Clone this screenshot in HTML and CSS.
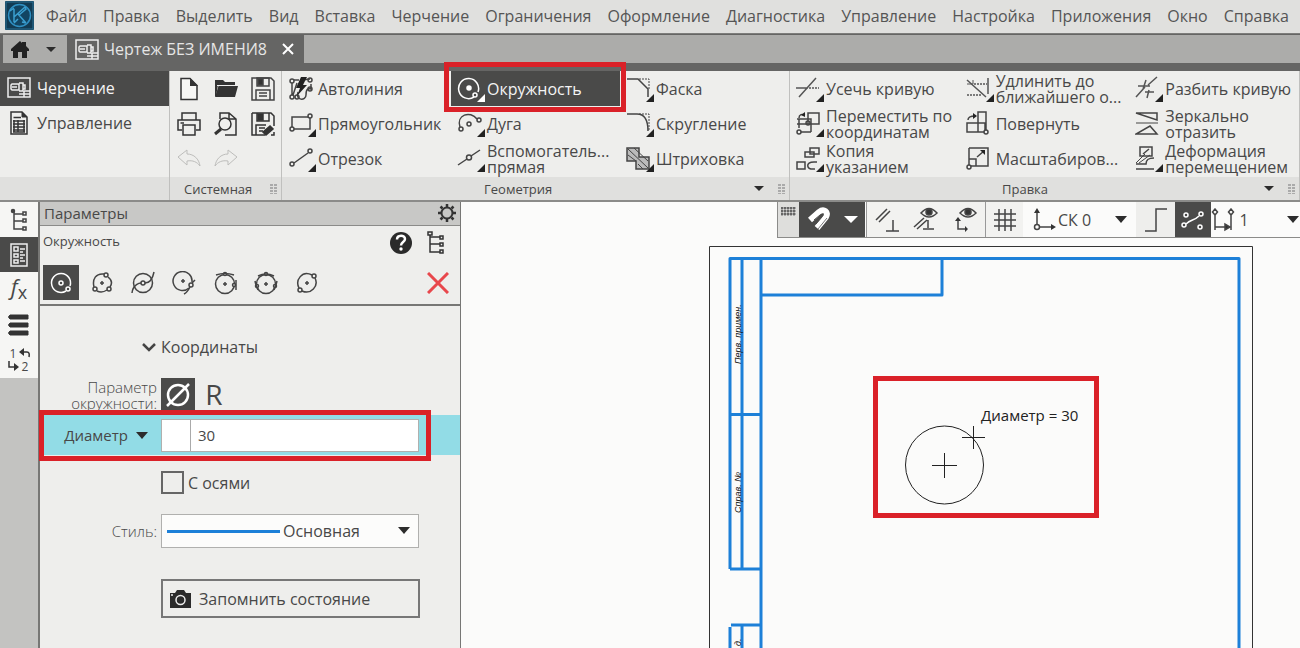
FILE: index.html
```html
<!DOCTYPE html>
<html lang="ru">
<head>
<meta charset="utf-8">
<title>Чертеж БЕЗ ИМЕНИ8</title>
<link rel="stylesheet" href="styles.css">
</head>
<body>
<div class="app">
  <header class="menubar">
    <svg class="logo" width="29" height="29" viewBox="0 0 29 29"><rect width="29" height="29" rx="1" fill="#123b53"/><rect x="1" y="1" width="27" height="27" fill="none" stroke="#2d7396"/><circle cx="14.500" cy="14.500" r="11" fill="#124563" stroke="#2f8fc2" stroke-width="1.500"/><path d="M9 8v13M9 16 20 6M13 13l8 9M5 10l4-3M9 22l4-4M20 6l1 2-7 6M17 21l4 1" fill="none" stroke="#3b9fd0" stroke-width="1.500"/></svg>
    <nav class="menu">
      <button>Файл</button><button>Правка</button><button>Выделить</button><button>Вид</button><button>Вставка</button><button>Черчение</button><button>Ограничения</button><button>Оформление</button><button>Диагностика</button><button>Управление</button><button>Настройка</button><button>Приложения</button><button>Окно</button><button>Справка</button>
    </nav>
  </header>

  <div class="tabs">
    <button class="home" aria-label="Главная">
      <svg width="20" height="18" viewBox="0 0 20 18"><path d="M1 9 10 1l2 2V2h4v4l3 3v2h-2v7h-5v-6H8v6H3v-7H1z" fill="#222"/></svg>
      <svg class="caret" width="10" height="5" viewBox="0 0 10 5"><path d="M0 0h10L5 5z"/></svg>
    </button>
    <div class="tab">
      <svg width="24" height="21" viewBox="0 0 24 21" fill="none" stroke="#eee" stroke-width="1.500"><rect x="1" y="1" width="22" height="19"/><path d="M5 7h7v6H5l-1-1V8zM12 6h4v8h-4M5 10h5M12 17h11M17 14h6M17 14v6M16 8h2v4h-2"/></svg>
      <span class="tab-title">Чертеж БЕЗ ИМЕНИ8</span>
      <button class="tab-close" aria-label="Закрыть"><svg width="12" height="12" viewBox="0 0 12 12"><path d="m1 1 10 10M11 1 1 11" stroke="#fff" stroke-width="2"/></svg></button>
    </div>
    <div class="tab-space"></div>
  </div>

  <div class="ribbon">
    <section class="group modes">
      <button class="mode active"><svg width="24" height="21" viewBox="0 0 24 21" fill="none" stroke="#eee" stroke-width="1.500"><rect x="1" y="1" width="22" height="19"/><path d="M5 7h7v6H5l-1-1V8zM12 6h4v8h-4M5 10h5M12 17h11M17 14h6M17 14v6M16 8h2v4h-2"/></svg>Черчение</button>
      <button class="mode"><svg width="24" height="24" viewBox="0 0 24 24" fill="none" stroke="#333"><path d="M4 1h11l5 5v17H4z" stroke-width="1.500"/><path d="M15 1v5h5z" fill="#333"/><path d="M6.500 6.500H14M6 10h12M6 13h12M6 16h12M6 19h12M7 9v12M11 9v12M17 9v12M6 21h12" stroke-width="1.500"/></svg>Управление</button>
      <div class="group-foot"></div>
    </section>

    <section class="group">
      <div class="system">
        <button aria-label="Создать"><svg width="24" height="24" viewBox="0 0 24 24"><path d="M4 1.500h9l7 7v14H4z" fill="#f7f7f5" stroke="#333" stroke-width="1.500"/><path d="M13 1v8h8z" fill="#333"/></svg></button>
        <button aria-label="Открыть"><svg width="24" height="24" viewBox="0 0 24 24"><path d="M1 3h8l2 2h10v3H4L2 19H1z" fill="#333"/><path d="M4.500 9H24l-3 11H1z" fill="#333"/><path d="M3 8.500h20" stroke="#eee"/></svg></button>
        <button aria-label="Сохранить"><svg width="24" height="24" viewBox="0 0 24 24" fill="none" stroke="#444" stroke-width="1.500"><path d="M1 1h19l3 3v19H1zM5 23V13h14v10M8 16h8M8 19h8"/><path d="M6 1h12v8H6z"/><path d="M7 2h5v6H7z" fill="#333"/></svg></button>
        <button aria-label="Печать"><svg width="24" height="24" viewBox="0 0 24 24" fill="none" stroke="#333" stroke-width="1.500"><path d="M5 8V1h14v7M5 18H1V8h22v10h-4M6 13h12v10H6zM3.500 11H7"/></svg></button>
        <button aria-label="Предпросмотр"><svg width="24" height="24" viewBox="0 0 24 24" fill="none" stroke="#333" stroke-width="1.500"><path d="M6 7V1h9l7 6v16H11M15 1v6h7"/><circle cx="11" cy="12" r="6" fill="#f0f0ee"/><path d="m7 17-6 5" stroke-width="3"/></svg></button>
        <button aria-label="Сохранить как"><svg width="24" height="24" viewBox="0 0 24 24" fill="none" stroke="#333" stroke-width="1.500"><path d="M1 1h19l3 3v10M14 23H1V1M5 23V13h10M6 1h12v8H6zM8 16h6M8 19h4"/><path d="M7 2h5v6H7z" fill="#333"/><path d="m12 20 7-6 3 3-7 6z" fill="#333"/><path d="M20 23h3v-3"/></svg></button>
        <button aria-label="Отменить" disabled><svg width="24" height="24" viewBox="0 0 24 24" fill="none" stroke="#bdbdbb"><path d="m1 10 9-7v4c7 0 12 5 13 12-3-4-7-6-13-5v4z"/></svg></button>
        <button aria-label="Повторить" disabled><svg width="24" height="24" viewBox="0 0 24 24" fill="none" stroke="#bdbdbb"><path d="m23 10-9-7v4C7 7 2 12 1 19c3-4 7-6 13-5v4z"/></svg></button>
      </div>
      <div class="group-foot"><span>Системная</span><i class="grip"></i></div>
    </section>

    <section class="group">
      <div class="tools">
        <button class="tool"><svg width="28" height="28" viewBox="0 0 28 28" fill="none" stroke="#444" stroke-width="1.500"><path d="M4 8v12M5 20 9 8M10 17c-3 9 8 9 8 3s2-7 5-6V9M14 5l8-1M6 5h5"/><circle cx="4" cy="6" r="2"/><circle cx="4" cy="22" r="2"/><circle cx="9" cy="22" r="2"/><circle cx="22" cy="5" r="2"/><circle cx="22" cy="14" r="2"/><path d="m13 2-5 11h4l-3 8 10-11h-4l4-8z" fill="#222" stroke="none"/></svg><span>Автолиния</span></button>
        <button class="tool active"><svg width="28" height="28" viewBox="0 0 28 28" fill="none" stroke="#fff" stroke-width="1.500"><path d="M17 22A10 10 0 1 1 21 17"/><circle cx="12" cy="13" r="2" fill="#fff"/><circle cx="18" cy="20" r="2"/><path d="M28 19v8h-8z" fill="#fff" stroke="none"/></svg><span>Окружность</span></button>
        <button class="tool"><svg width="28" height="28" viewBox="0 0 28 28" fill="none" stroke="#444" stroke-width="1.500"><path d="M1 4h11l10 10v8"/><path d="M13 4h10v10" stroke-dasharray="2 1" stroke-width="1"/><path d="M28 19v8h-8z" fill="#222" stroke="none"/></svg><span>Фаска</span></button>
        <button class="tool"><svg width="28" height="28" viewBox="0 0 28 28" fill="none" stroke="#444" stroke-width="1.500"><path d="M4 17V7h16M22 8v11H6"/><circle cx="22" cy="6" r="2"/><circle cx="4" cy="19" r="2"/><path d="M28 19v8h-8z" fill="#222" stroke="none"/></svg><span>Прямоугольник</span></button>
        <button class="tool"><svg width="28" height="28" viewBox="0 0 28 28" fill="none" stroke="#444" stroke-width="1.500"><path d="M3 17C-1 5 13 0 20 9"/><circle cx="4" cy="19" r="2"/><circle cx="22" cy="10" r="2"/><circle cx="12" cy="14" r="2"/><path d="M28 19v8h-8z" fill="#222" stroke="none"/></svg><span>Дуга</span></button>
        <button class="tool"><svg width="28" height="28" viewBox="0 0 28 28" fill="none" stroke="#444" stroke-width="1.500"><path d="M1 4h10c7 0 11 6 11 17"/><path d="M13 4h10v17" stroke-dasharray="2 1" stroke-width="1"/><path d="M28 19v8h-8z" fill="#222" stroke="none"/></svg><span>Скругление</span></button>
        <button class="tool"><svg width="28" height="28" viewBox="0 0 28 28" fill="none" stroke="#444" stroke-width="1.500"><path d="M6 18 20 8"/><circle cx="22" cy="6" r="2"/><circle cx="4" cy="19" r="2"/><path d="M28 19v8h-8z" fill="#222" stroke="none"/></svg><span>Отрезок</span></button>
        <button class="tool"><svg width="28" height="28" viewBox="0 0 28 28" fill="none" stroke="#444" stroke-width="1.500"><path d="m1 20 9-6M14 11l9-6"/><circle cx="12" cy="12.500" r="2.500"/><path d="M28 19v8h-8z" fill="#222" stroke="none"/></svg><span>Вспомогатель...<br>прямая</span></button>
        <button class="tool"><svg width="28" height="28" viewBox="0 0 28 28" fill="#bbb" stroke="#444" stroke-width="1.500"><path d="M1 3h12v9h10v12H10v-8H1z"/><path d="m2 4 20 19M2 10l8 6M8 3l14 13M12 19l5 5" stroke-width="1"/><path d="M28 19v8h-8z" fill="#222" stroke="none"/></svg><span>Штриховка</span></button>
      </div>
      <div class="group-foot"><span class="geo-title">Геометрия</span><svg class="caret" width="10" height="5" viewBox="0 0 10 5"><path d="M0 0h10L5 5z"/></svg><i class="grip"></i></div>
    </section>

    <section class="group">
      <div class="tools">
        <button class="tool"><svg width="28" height="28" viewBox="0 0 28 28" fill="none" stroke="#555" stroke-width="1.500"><path d="M0 13h12M3 22 20 3"/><path d="M13 13h10" stroke-dasharray="2 1"/><path d="M28 19v8h-8z" fill="#222" stroke="none"/></svg><span>Усечь кривую</span></button>
        <button class="tool"><svg width="28" height="28" viewBox="0 0 28 28" fill="none" stroke="#555" stroke-width="1.500"><path d="m1 5 19 17M22 3v16"/><path d="M8 9h13M1 20h15" stroke-dasharray="2 1"/><path d="M1 9h6V5" stroke-width="1"/><path d="M28 19v8h-8z" fill="#222" stroke="none"/></svg><span>Удлинить до<br>ближайшего о...</span></button>
        <button class="tool"><svg width="28" height="28" viewBox="0 0 28 28" fill="none" stroke="#555" stroke-width="1.500"><path d="M1 22 10 12M13 10l9-8M3 11h12M11 5l-3 9M10 17h9M14 15l-2 8"/><path d="M28 19v8h-8z" fill="#222" stroke="none"/></svg><span>Разбить кривую</span></button>
        <button class="tool"><svg width="28" height="28" viewBox="0 0 28 28" fill="none" stroke="#444" stroke-width="1.500"><path d="M12 3h11v11H12zM1 9h14v5H1M3 9v9M3 8c0-4 3-4 6-3M15 14v8M5 22h10"/><circle cx="12" cy="13" r="2"/><circle cx="3" cy="22" r="2"/><path d="M9 2v5L5 5zM28 19v8h-8z" fill="#222" stroke="none"/></svg><span>Переместить по<br>координатам</span></button>
        <button class="tool"><svg width="28" height="28" viewBox="0 0 28 28" fill="none" stroke="#444" stroke-width="1.500"><path d="M12 2h8v20h-8zM1 13h18v9H1zM2 10c0-4 4-4 7-4"/><circle cx="20" cy="22" r="2" fill="#eee"/><path d="m7 3 4 3-4 3z" fill="#222" stroke="none"/></svg><span>Повернуть</span></button>
        <button class="tool"><svg width="28" height="28" viewBox="0 0 28 28" fill="none" stroke="#444" stroke-width="1.500"><path d="M1 3h21v7zM1 24h21l-7-8z"/><path d="M1 13h22" stroke-width="1"/></svg><span>Зеркально<br>отразить</span></button>
        <button class="tool"><svg width="28" height="28" viewBox="0 0 28 28" fill="none" stroke="#444" stroke-width="1.500"><path d="M14 3h9v6h-9zM9 7h9v5H9zM1 17h8v7H1zM19 24c-9 1-10-7-1-7h3"/><path d="M28 19v8h-8z" fill="#222" stroke="none"/></svg><span>Копия<br>указанием</span></button>
        <button class="tool"><svg width="28" height="28" viewBox="0 0 28 28" fill="none" stroke="#444" stroke-width="1.500"><path d="M3 3h19v18H5M3 3v18M3 14h7v7M11 12l7-6"/><circle cx="3" cy="22" r="2" fill="#eee"/><path d="M14 5h5v5z" fill="#222" stroke="none"/></svg><span>Масштабиров...</span></button>
        <button class="tool"><svg width="28" height="28" viewBox="0 0 28 28" fill="none" stroke="#444" stroke-width="1.500"><path d="M5 2h12v9H5zM1 19h10c0-5 3-6 8-6M1 24h18M8 9l6-5" /><path d="M1 18 10 9M4 18l11-8" stroke-width="1"/><path d="M28 19v8h-8z" fill="#222" stroke="none"/></svg><span>Деформация<br>перемещением</span></button>
      </div>
      <div class="group-foot"><span class="edit-title">Правка</span><svg class="caret" width="10" height="5" viewBox="0 0 10 5"><path d="M0 0h10L5 5z"/></svg><i class="grip"></i></div>
    </section>
  </div>

  <main class="work">
    <aside class="rail">
      <button aria-label="Дерево"><svg width="24" height="24" viewBox="0 0 24 24" fill="none" stroke="#444" stroke-width="1.500"><path d="M7 3v18h9M7 6h9M7 13h9"/><circle cx="6" cy="3" r="1.500" fill="#444"/><path d="M16 4h3v3h-3zM16 11h3v3h-3zM16 19h3v3h-3z"/></svg></button>
      <button class="active" aria-label="Параметры"><svg width="24" height="24" viewBox="0 0 24 24" fill="none" stroke="#eee" stroke-width="1.500"><path d="M4 1h16v22H4zM7 4h4v4H7zM7 11h4v3H7zM7 17h4v3H7zM13 6h5M13 9h3M13 12h5M13 15h3M13 18h5"/></svg></button>
      <button class="fx" aria-label="Переменные"><span>f</span><small>x</small></button>
      <button aria-label="Меню"><svg width="24" height="24" viewBox="0 0 24 24"><path d="M3 2h18v4H3q-3-2 0-4M3 10h18v4H3q-3-2 0-4M3 18h18v4H3q-3-2 0-4" fill="#333" stroke="#333"/></svg></button>
      <button class="rebuild" aria-label="Перестроить"><span>1</span><svg width="12" height="12" viewBox="0 0 12 12" fill="none" stroke="#333" stroke-width="1.500"><path d="M4 5h4q3 0 2 5"/><path d="M5 1v8L0 5z" fill="#333" stroke="none"/></svg><svg width="12" height="12" viewBox="0 0 12 12" fill="none" stroke="#333" stroke-width="1.500"><path d="M2 1v6h6"/><path d="M7 3v8l5-4z" fill="#333" stroke="none"/></svg><span>2</span></button>
    </aside>

    <section class="params">
      <header class="params-head"><span>Параметры</span>
        <button aria-label="Настройка панели"><svg width="18" height="18" viewBox="0 0 18 18" fill="none" stroke="#333"><circle cx="9" cy="9" r="5.500" stroke-width="2"/><path d="M9 0v3M9 15v3M0 9h3M15 9h3M2.500 2.500l2 2M13.500 13.500l2 2M2.500 15.500l2-2M13.500 4.500l2-2" stroke-width="2.500"/></svg></button>
      </header>
      <div class="command">
        <div class="command-head"><span>Окружность</span>
          <button aria-label="Справка"><svg width="24" height="24" viewBox="0 0 24 24"><circle cx="12" cy="12" r="11" fill="#2a2a2a"/><path d="M8 8.500c0-5 8-5 8-.5 0 3-4 3-4 6.500" fill="none" stroke="#fff" stroke-width="2.500"/><circle cx="12" cy="18" r="1.700" fill="#fff"/></svg></button>
          <button aria-label="Дерево"><svg width="24" height="24" viewBox="0 0 24 24" fill="none" stroke="#333" stroke-width="1.500"><path d="M5 4v17h10M5 6h10M5 13h10M3 1h4v3H3zM15 5h3v3h-3zM15 12h3v3h-3zM15 19h3v3h-3z"/></svg></button>
        </div>
        <div class="variants">
          <button class="active" aria-label="По центру"><svg width="24" height="24" viewBox="0 0 24 24" fill="none" stroke="#fff" stroke-width="1.500"><path d="M17 20A9.500 9.500 0 1 1 21 15"/><circle cx="12" cy="12" r="2"/><circle cx="19" cy="18" r="2"/></svg></button>
          <button aria-label="По трем точкам"><svg width="24" height="24" viewBox="0 0 24 24" fill="none" stroke="#444" stroke-width="1.500"><path d="M14 3C6 2 2 8 4 16M7 20c4 2 7 1 10-1M18 6c4 3 4 7 2 10"/><circle cx="16" cy="4" r="2"/><circle cx="5" cy="18" r="2"/><circle cx="19" cy="18" r="2"/><path d="M10 12h4M12 10v4"/></svg></button>
          <button aria-label="С центром на объекте"><svg width="24" height="24" viewBox="0 0 24 24" fill="none" stroke="#444" stroke-width="1.500"><circle cx="12" cy="12" r="9.500"/><circle cx="12" cy="12" r="2"/><path d="M1 22C2 13 9 12 10 12M14 12c6 0 8-6 9-11"/></svg></button>
          <button aria-label="Касательная к кривой"><svg width="24" height="24" viewBox="0 0 24 24" fill="none" stroke="#444" stroke-width="1.500"><path d="M17 17A9.500 9.500 0 1 1 20 11"/><circle cx="19" cy="14" r="2"/><path d="M23 9c-1 1-2 2-3 3M18 16c-2 4-4 6-6 7M9 10h4M11 8v4"/></svg></button>
          <button aria-label="Касательная к двум кривым"><svg width="24" height="24" viewBox="0 0 24 24" fill="none" stroke="#444" stroke-width="1.500"><circle cx="12" cy="13" r="9.500"/><circle cx="12" cy="3" r="1.500" fill="#eee"/><circle cx="21" cy="14" r="1.500" fill="#eee"/><path d="M3 4q9-3 18 0M23 9v10M10 13h4M12 11v4"/></svg></button>
          <button aria-label="Касательная к трем кривым"><svg width="24" height="24" viewBox="0 0 24 24" fill="none" stroke="#444" stroke-width="1.500"><circle cx="12" cy="13" r="9.500"/><circle cx="12" cy="3" r="1.500" fill="#eee"/><circle cx="21" cy="15" r="1.500" fill="#eee"/><circle cx="3" cy="15" r="1.500" fill="#eee"/><path d="M4 5q8-4 16 0M23 10q-1 5-3 9M1 10q1 5 3 9M10 13h4M12 11v4"/></svg></button>
          <button aria-label="По двум точкам"><svg width="24" height="24" viewBox="0 0 24 24" fill="none" stroke="#444" stroke-width="1.500"><path d="M17 4C7-1 0 9 4 17M7 20c9 4 17-5 13-13"/><circle cx="19" cy="5" r="2"/><circle cx="5" cy="19" r="2"/><path d="M10 12h4M12 10v4"/></svg></button>
          <button class="cancel" aria-label="Завершить"><svg width="22" height="22" viewBox="0 0 22 22"><path d="m1 1 20 20M21 1 1 21" stroke="#e8474c" stroke-width="3"/></svg></button>
        </div>
      </div>

      <form class="form">
        <button type="button" class="section-title"><svg width="14" height="9" viewBox="0 0 14 9"><path d="m1 1 6 6 6-6" fill="none" stroke="#444" stroke-width="2.500"/></svg>Координаты</button>
        <div class="row">
          <span class="label">Параметр<br>окружности:</span>
          <div class="dr">
            <button type="button" class="active" aria-label="Диаметр"><svg width="26" height="26" viewBox="0 0 26 26" fill="none" stroke="#fff" stroke-width="2.500"><circle cx="13" cy="13" r="10"/><path d="M2 24 24 2"/></svg></button>
            <button type="button">R</button>
          </div>
        </div>
        <div class="row diameter">
          <label class="label" for="diam">Диаметр <svg class="caret" width="12" height="7" viewBox="0 0 12 7"><path d="M0 0h12L6 7z"/></svg></label>
          <div class="field"><button type="button" aria-label="Фиксировать"></button><input id="diam" type="text" value="30"></div>
        </div>
        <label class="row axes"><input type="checkbox"><span>С осями</span></label>
        <div class="row style-row">
          <label class="label" for="style">Стиль:</label>
          <div class="select"><select id="style"><option>Основная</option></select><svg class="caret" width="12" height="7" viewBox="0 0 12 7"><path d="M0 0h12L6 7z"/></svg></div>
        </div>
        <button type="button" class="remember"><svg width="22" height="18" viewBox="0 0 22 18"><path d="M1 3h5l2-3h7l2 3h5v15H1z" fill="#2b2b2b"/><circle cx="11.500" cy="10" r="4.500" fill="none" stroke="#eee" stroke-width="1.500"/><path d="M2 5h2" stroke="#eee" stroke-width="1.500"/></svg>Запомнить состояние</button>
      </form>
    </section>

    <section class="canvas">
      <svg class="drawing" width="100%" height="100%">
        <path d="M248.500 460V44.500h543V460" class="sheet"/>
        <path d="M269 367V56.500h509V460M281 56v311M300 56v404M269 212.500h31M269 367h31.500M300 93h181V56M270 423h31M269 425v40M281 423v40" class="frame"/>
        <text class="stamp" transform="translate(280 162) rotate(-90)">Перв. примен.</text>
        <text class="stamp" transform="translate(280 311) rotate(-90)">Справ. №</text>
        <text class="stamp" transform="translate(280 444) rotate(-90)">д.</text>
        <circle cx="483.500" cy="263" r="39" class="thin"/>
        <path d="M471 263.500h25M483.500 251v25M501 235.500h23M512.500 224v23" class="thin"/>
        <text x="520" y="219" class="hint">Диаметр = 30</text>
        <rect x="414.500" y="176.500" width="221" height="137" class="mark"/>
      </svg>
      <div class="viewbar">
        <i class="drag"></i>
        <button class="dark snap" aria-label="Привязки"><svg width="26" height="26" viewBox="0 0 26 26" fill="none" stroke="#fff"><path d="M4 13 13 5c5-4 10 0 7 5l-9 11" stroke-width="6"/><path d="m8 13 6-5c3-2 4 0 2 2l-6 7" stroke="#4a4a49" stroke-width="1"/><path d="m12 22 9-11" stroke="#777"/></svg><svg width="14" height="7" viewBox="0 0 14 7"><path d="M0 0h14L7 7z" fill="#fff"/></svg></button>
        <div class="view-icons">
          <button aria-label="Ограничения"><svg width="26" height="26" viewBox="0 0 26 26" fill="none" stroke="#444" stroke-width="1.500"><path d="M2 13 13 2M5 15 16 4M19 13v11M12 24h13"/></svg></button>
          <button aria-label="Показать ограничения"><svg width="26" height="26" viewBox="0 0 26 26" fill="none" stroke="#444" stroke-width="1.500"><path d="M8 6q8-9 16 0-8 8-16 0zM1 20l10-9M4 22l10-9M15 13v8M10 22h11"/><circle cx="16" cy="5" r="3" fill="#333"/></svg></button>
          <button aria-label="Показать степени свободы"><svg width="26" height="26" viewBox="0 0 26 26" fill="none" stroke="#444" stroke-width="1.500"><path d="M8 6q8-9 16 0-8 8-16 0zM6 12v10h8"/><circle cx="16" cy="5" r="3" fill="#333"/><path d="m3 14 3-4 3 4zM13 19v6l3-3z" fill="#333" stroke="none"/></svg></button>
        </div>
        <button class="plain" aria-label="Сетка"><svg width="24" height="24" viewBox="0 0 24 24"><path d="M6 1v22M12 1v22M18 1v22M1 6h22M1 12h22M1 18h22" stroke="#444" stroke-width="1.500"/></svg></button>
        <button class="cs"><svg width="26" height="26" viewBox="0 0 26 26" fill="none" stroke="#444" stroke-width="1.500"><path d="M5 18V4M8 20h12"/><circle cx="5" cy="20" r="2.500"/><path d="m2 6 3-5 3 5zM19 17v6l5-3z" fill="#333" stroke="none"/></svg><span>СК 0</span><svg class="caret" width="12" height="7" viewBox="0 0 12 7"><path d="M0 0h12L6 7z"/></svg></button>
        <button class="ortho" aria-label="Ортогональное черчение"><svg width="24" height="24" viewBox="0 0 24 24"><path d="M1 23h11V1h11" fill="none" stroke="#444" stroke-width="1.500"/></svg></button>
        <button class="dark round" aria-label="Округление"><svg width="24" height="24" viewBox="0 0 24 24" fill="none" stroke="#fff" stroke-width="1.500"><path d="M5 16c5-5 8-3 13-8"/><circle cx="3" cy="17" r="2"/><circle cx="20" cy="6" r="2"/><circle cx="5" cy="7" r="2"/><circle cx="19" cy="19" r="2"/></svg></button>
        <button class="step"><svg width="24" height="24" viewBox="0 0 24 24" fill="none" stroke="#444" stroke-width="1.500"><path d="M4 7v15M20 7v15M4 19h13M4 1l2.500 3L4 7 1.500 4zM20 1l2.500 3L20 7l-2.500-3z"/><path d="M14 16v6l5-3z" fill="#333"/></svg><span>1</span><svg class="caret" width="12" height="7" viewBox="0 0 12 7"><path d="M0 0h12L6 7z"/></svg></button>
      </div>
    </section>
  </main>
</div>
</body>
</html>
```

FILE: styles.css
```css
* { box-sizing: border-box; }
body {
  margin: 0;
  font-family: "Open Sans", "Noto Sans", sans-serif;
  font-size: 16px;
  color: #484848;
  background: #fbfbfa;
}
button, input, select {
  font: inherit;
  color: inherit;
  margin: 0;
  padding: 0;
  border: 0;
  background: none;
}
svg { display: block; flex: none; }
.caret { fill: #2c2c2c; }
.app { display: flex; flex-direction: column; height: 100vh; overflow: hidden; }

/* Menu and document tabs */
.menubar {
  display: flex;
  align-items: center;
  height: 33px;
  flex: none;
  padding: 0 11px 2px 5px;
  gap: 12px;
  background: #e0e0de;
}
.menu { display: flex; flex: 1; justify-content: space-between; white-space: nowrap; color: #555; }
.tabs {
  display: flex;
  height: 38px;
  flex: none;
  padding: 1px 0 8px 3px;
  border-top: 1px solid #7d7d7b;
  background: #656564;
}
.home {
  display: flex;
  align-items: center;
  width: 64px;
  padding-left: 7px;
  gap: 16px;
  background: #acacaa;
}
.tab { display: flex; align-items: center; padding: 0 10px 0 8px; gap: 5px; color: #e6e6e6; }
.tab-close { margin-left: 10px; }
.tab-space { flex: 1; background: #acacaa; }

/* Ribbon */
.ribbon {
  display: grid;
  grid-template-columns: 170px 112px 508fr 510fr;
  height: 131px;
  flex: none;
  background: #eeeeec;
  border-bottom: 2px solid #8b8b89;
}
.group { display: flex; flex-direction: column; min-width: 0; border-right: 1px solid #c0c0be; }
.mode { display: flex; align-items: center; height: 35px; padding: 0 0 2px 7px; gap: 6px; }
.active { background: #4a4a49; color: #f4f4f4; }
.group-foot {
  display: flex;
  align-items: center;
  height: 23px;
  margin-top: auto;
  padding: 0 4px 0 14px;
  font-size: 13px;
  background: #e0e0de;
}
.grip {
  width: 7px;
  height: 11px;
  margin-left: auto;
  background: repeating-linear-gradient(#e0e0de 0 1px, transparent 1px 3px), linear-gradient(90deg, #aaa 0 3px, transparent 3px 4px, #aaa 4px);
}
.group-foot .caret { margin-left: auto; }
.group-foot .caret + .grip { margin-left: 14px; }
.geo-title { margin-left: 188px; }
.edit-title { margin-left: 198px; }
.system { display: grid; grid-template-columns: repeat(3, 24px); grid-auto-rows: 35px; column-gap: 13px; align-items: center; padding-left: 7px; }
.tools { display: grid; grid-template-columns: repeat(3, 1fr); grid-auto-rows: 35px; }
.tool {
  display: flex;
  align-items: center;
  position: relative;
  min-width: 0;
  padding: 0 0 0 6px;
  gap: 2px;
  text-align: left;
  line-height: 16px;
  white-space: nowrap;
}
.tool.active::after, .diameter::after {
  content: "";
  position: absolute;
  inset: -9px -6px -6px -7px;
  border: 5px solid #da2128;
  z-index: 2;
}

/* Work area */
.work { display: flex; flex: 1; min-height: 0; }
.rail { display: flex; flex-direction: column; width: 38px; flex: none; background: linear-gradient(#f6f6f4 0 176px, #c3c3c1 176px); }
.rail button { display: flex; align-items: center; justify-content: center; height: 35px; }
.rail .fx { align-items: flex-start; font-size: 22px; line-height: 28px; }
.fx span { font-style: italic; }
.fx small { padding-top: 6px; font-size: 18px; line-height: 28px; }
.rail .rebuild {
  display: grid;
  grid-template-columns: 12px 12px;
  grid-template-rows: 13px 13px;
  align-content: center;
  place-items: center;
  font-size: 12px;
  line-height: 13px;
}
.params {
  display: flex;
  flex-direction: column;
  width: 423px;
  flex: none;
  border-left: 2px solid #777775;
  border-right: 1px solid #777775;
  background: #eeeeec;
}
.params-head {
  display: flex;
  align-items: center;
  justify-content: space-between;
  height: 24px;
  padding: 0 4px 2px 4px;
  font-size: 15px;
  background: #c8c8c6;
  border-bottom: 1px solid #8b8b89;
}
.command { height: 80px; padding: 4px 11px 0 3px; border-bottom: 2px solid #777775; }
.command-head { display: flex; height: 26px; align-items: center; gap: 12px; font-size: 13px; }
.command-head span { margin-right: auto; padding-bottom: 5px; }
.variants { display: flex; margin-top: 9px; gap: 5px; }
.variants button { display: grid; place-items: center; width: 36px; height: 35px; }
.variants .cancel { width: 22px; margin-left: auto; }
.form { display: flex; flex-direction: column; }
.section-title { display: flex; align-items: center; gap: 5px; height: 22px; margin: 30px 0 20px 102px; }
.row { display: grid; grid-template-columns: 117px 258px; column-gap: 4px; align-items: center; font-size: 16px; }
.label { text-align: right; font-size: 15px; font-weight: 300; line-height: 16px; }
.dr { display: flex; gap: 2px; height: 33px; }
.dr button { display: grid; place-items: center; width: 34px; font-size: 28px; line-height: 33px; }
.diameter { position: relative; height: 40px; margin-top: 4px; background: #92dce6; }
.diameter::after { inset: -5px 29px -6px -1px; }
.diameter .label { display: flex; align-items: center; justify-content: flex-end; padding-right: 9px; gap: 8px; font-weight: 400; }
.field { display: flex; height: 33px; border: 1px solid #b0b0ae; background: #fff; font-size: 15px; }
.field button { width: 29px; border-right: 1px solid #aaa; }
.field input { flex: 1; min-width: 0; padding-left: 7px; }
.axes { grid-template-columns: 23px auto; justify-content: start; margin: 16px 0 0 121px; }
.axes input { appearance: none; width: 23px; height: 23px; border: 2px solid #666; }
.style-row { margin-top: 20px; }
.select { position: relative; }
.select select {
  appearance: none;
  width: 100%;
  height: 34px;
  padding-left: 121px;
  border: 1px solid #b0b0ae;
  border-radius: 0;
  background: linear-gradient(#1d80d8, #1d80d8) 5px 15px / 113px 3px no-repeat #fcfcfb;
}
.select .caret { position: absolute; right: 9px; top: 13px; pointer-events: none; }
.remember { display: flex; align-items: center; gap: 8px; width: 259px; height: 39px; margin: 31px 0 0 121px; padding-left: 6px; border: 2px solid #777; }

/* Drawing area */
.canvas { position: relative; flex: 1; min-width: 0; background: #fbfbfa; }
.drawing { position: absolute; inset: 0; }
.sheet { fill: none; stroke: #333; stroke-width: 1; }
.frame { fill: none; stroke: #1d80d8; stroke-width: 3; stroke-linejoin: round; }
.thin { fill: none; stroke: #222; stroke-width: 1; }
.mark { fill: none; stroke: #da2128; stroke-width: 5; }
.stamp { font: italic 9px "Liberation Sans", sans-serif; fill: #111; }
.hint { font: 15px "Open Sans", sans-serif; fill: #222; }
.viewbar {
  display: flex;
  position: relative;
  width: 523px;
  height: 36px;
  margin-left: auto;
  border: 1px solid #8b8b89;
  border-top: 0;
  border-right: 0;
  overflow: hidden;
  background: #fbfbfa;
}
.viewbar button { display: flex; align-items: center; justify-content: center; }
.drag {
  width: 21px;
  flex: none;
  background: linear-gradient(90deg, #dededc 0 3px, transparent 3px 18px, #dededc 18px), linear-gradient(#dededc 0 5px, transparent 5px 14px, #dededc 14px), radial-gradient(circle at 1px 1px, #666 1px, #dededc 2px) 3px 5px / 3px 3px;
}
.viewbar .dark { background: #4a4a49; }
.snap { width: 66px; gap: 12px; }
.view-icons { display: flex; width: 120px; justify-content: space-around; border: 1px solid #999; border-width: 0 1px; margin-left: 1px; background: #f2f2f0; }
.plain { width: 37px; background: #f2f2f0; }
.cs { width: 113px; gap: 4px; }
.cs span { margin-left: -4px; }
.cs .caret { margin-left: 20px; }
.ortho { width: 39px; background: #eeeeec; }
.round { width: 36px; }
.step { width: 88px; flex: none; gap: 4px; }
.step .caret { margin-left: 34px; }
```
